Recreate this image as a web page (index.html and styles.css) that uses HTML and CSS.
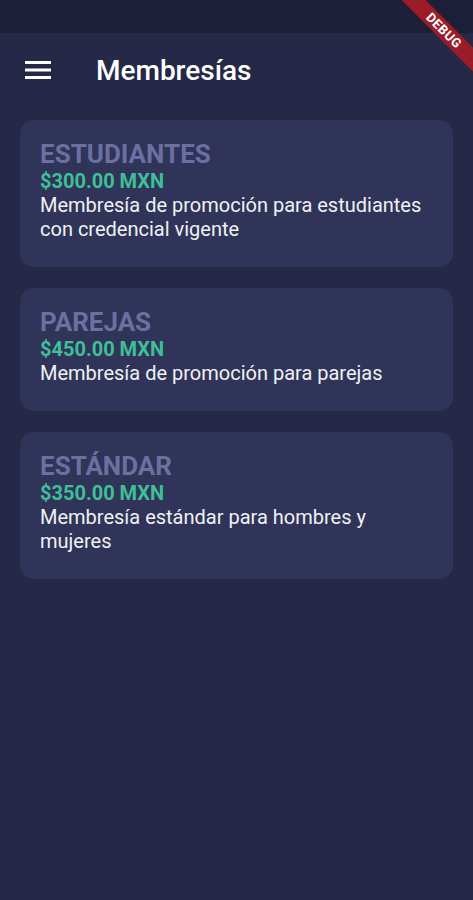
FILE: index.html
```html
<!DOCTYPE html>
<html lang="es">
<head>
    <meta charset="UTF-8">
    <meta name="viewport" content="width=device-width, initial-scale=1.0">
    <title>Membresías</title>
    <link rel="stylesheet" href="styles.css">
</head>
<body>
    <div class="status-bar"></div>
    <header class="app-bar">
        <button class="menu-btn" aria-label="Menú">
            <svg width="26" height="18" viewBox="0 0 26 18">
                <rect x="0" y="0" width="26" height="3" fill="#fff"/>
                <rect x="0" y="7.5" width="26" height="3" fill="#fff"/>
                <rect x="0" y="15" width="26" height="3" fill="#fff"/>
            </svg>
        </button>
        <h1>Membresías</h1>
    </header>

    <main class="list">
        <div class="card">
            <h2 class="card-title">ESTUDIANTES</h2>
            <p class="card-price">$300.00 MXN</p>
            <p class="card-desc">Membresía de promoción para estudiantes con credencial vigente</p>
        </div>
        <div class="card">
            <h2 class="card-title">PAREJAS</h2>
            <p class="card-price">$450.00 MXN</p>
            <p class="card-desc">Membresía de promoción para parejas</p>
        </div>
        <div class="card">
            <h2 class="card-title">ESTÁNDAR</h2>
            <p class="card-price">$350.00 MXN</p>
            <p class="card-desc">Membresía estándar para hombres y mujeres</p>
        </div>
    </main>

    <div class="debug-corner">
        <div class="debug-ribbon">DEBUG</div>
    </div>
</body>
</html>
```

FILE: styles.css
```css
body {
    font-family: Roboto, "Noto Sans", sans-serif;
    background-color: #252947;
    margin: 0;
    min-height: 900px;
}
.status-bar {
    height: 33px;
    background-color: #1d1f38;
}
.app-bar {
    height: 74px;
    display: flex;
    align-items: center;
    padding: 0 0 3px 25px;
    background-color: #252947;
}
.menu-btn {
    background: none;
    border: none;
    padding: 0;
    width: 26px;
    height: 18px;
    display: flex;
    margin-right: 45px;
}
.app-bar h1 {
    margin: 0;
    color: #fff;
    font-size: 28px;
    font-weight: 500;
}
.list {
    display: flex;
    flex-direction: column;
    gap: 21px;
    padding: 10px 20px;
}
.card {
    background-color: #2f3458;
    border-radius: 14px;
    padding: 19px 20px 26px;
}
.card-title {
    margin: 0;
    font-size: 26px;
    font-weight: 700;
    color: #6c70a0;
}
.card-price {
    margin: 0;
    font-size: 20px;
    font-weight: 700;
    color: #3fbf98;
}
.card-desc {
    margin: 0;
    font-size: 20px;
    color: #f1f1f4;
}
.debug-corner {
    position: absolute;
    top: 0;
    right: 0;
    width: 100px;
    height: 100px;
    overflow: hidden;
}
.debug-ribbon {
    position: absolute;
    left: -9px;
    top: 22px;
    width: 160px;
    height: 17px;
    line-height: 17px;
    transform: rotate(45deg);
    background-color: #9b1c27;
    color: #fff;
    font-size: 13px;
    font-weight: 700;
    text-align: center;
    letter-spacing: 0.5px;
}
```
